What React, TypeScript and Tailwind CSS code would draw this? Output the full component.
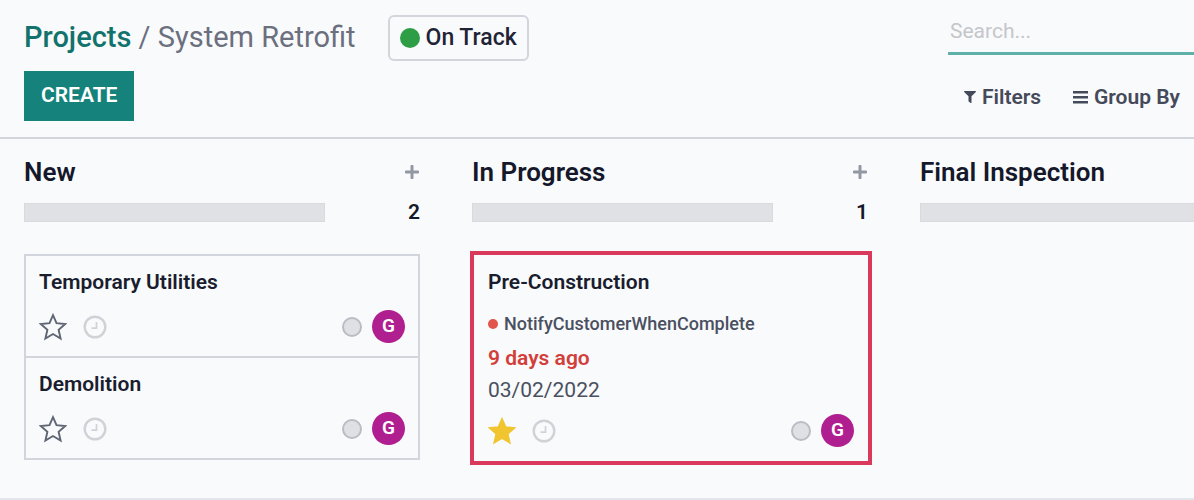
import { FaFilter, FaPlus } from "react-icons/fa";

interface Task {
  title: string;
  starred?: boolean;
  highlighted?: boolean;
  tag?: string;
  deadline?: string;
  date?: string;
}

interface Stage {
  name: string;
  tasks: Task[];
}

const stages: Stage[] = [
  {
    name: "New",
    tasks: [{ title: "Temporary Utilities" }, { title: "Demolition" }],
  },
  {
    name: "In Progress",
    tasks: [
      {
        title: "Pre-Construction",
        starred: true,
        highlighted: true,
        tag: "NotifyCustomerWhenComplete",
        deadline: "9 days ago",
        date: "03/02/2022",
      },
    ],
  },
  { name: "Final Inspection", tasks: [] },
];

function Star({ filled }: { filled?: boolean }) {
  return (
    <svg
      viewBox="0 0 28 28"
      className={filled ? "size-7 fill-[#f0c530] stroke-[#f0c530]" : "size-7 fill-none stroke-[#5f6673]"}
      strokeWidth="1.9"
    >
      <path d="M14 2.2l3.5 8 8.7.8-6.6 5.8 2 8.7L14 21l-7.6 4.5 2-8.7L1.8 11l8.7-.8z" />
    </svg>
  );
}

function Clock() {
  return (
    <svg viewBox="0 0 24 24" className="size-6" fill="none" stroke="#d0d2d7">
      <circle cx="12" cy="12" r="10.3" strokeWidth="2.4" />
      <path d="M13.5 7v6.2H8.5" strokeWidth="1.7" />
    </svg>
  );
}

function Bars() {
  return (
    <svg viewBox="0 0 15 14" className="h-3.5 w-[15px]" fill="#454a5a">
      <path d="M0 1h15v2.4H0zM0 6h15v2.4H0zM0 11h15v2.4H0z" />
    </svg>
  );
}

function TaskCard({ task }: { task: Task }) {
  return (
    <article
      className={
        task.highlighted
          ? "-mt-[3px] -mr-1 -ml-0.5 border-4 border-[#d93a5c] px-3.5 pt-[13px] pb-3.5"
          : "border-2 border-[#d3d5dc] px-[13px] pt-3 pb-[13px] not-first:border-t-0"
      }
    >
      <h3 className="text-[21px] leading-7 font-semibold text-[#1a1d2e]">{task.title}</h3>
      {task.tag && (
        <p className="mt-4 flex items-center gap-1.5 text-[18px] leading-6 font-medium text-[#4a5060]">
          <span className="size-2.5 rounded-full bg-[#e0554c]" />
          {task.tag}
        </p>
      )}
      {task.deadline && (
        <p className="mt-2 text-[21px] leading-7 font-semibold text-[#d23f3a]">{task.deadline}</p>
      )}
      {task.date && <p className="mt-1 text-[21px] leading-7 text-[#4a5060]">{task.date}</p>}
      <div className={task.date ? "mt-2.5 flex items-center" : "mt-3.5 flex items-center"}>
        <button aria-label="Priority" className="mr-4">
          <Star filled={task.starred} />
        </button>
        <button aria-label="Schedule activity">
          <Clock />
        </button>
        <button
          aria-label="Task state"
          className="mr-2.5 ml-auto size-5 rounded-full border-2 border-[#b9bdc3] bg-[#dfe0e4]"
        />
        <span className="flex size-[33px] items-center justify-center rounded-full bg-[#b01f8f] text-[19px] font-semibold text-white">
          G
        </span>
      </div>
    </article>
  );
}

function StageColumn({ stage }: { stage: Stage }) {
  return (
    <section className="w-[396px] shrink-0">
      <div className="flex items-center justify-between">
        <h2 className="text-[26px] leading-8 font-semibold text-[#15182a]">{stage.name}</h2>
        <button aria-label="Add task" className="text-[#9298a2]">
          <FaPlus className="size-4" />
        </button>
      </div>
      <div className="mt-2.5 flex h-7 items-center justify-between">
        <div className="h-[19px] w-[301px] border border-[#d8dade] bg-[#e0e1e5]" />
        <span className="text-[21px] leading-7 font-semibold text-[#15182a]">
          {stage.tasks.length || ""}
        </span>
      </div>
      <div className="mt-7">
        {stage.tasks.map((task) => (
          <TaskCard key={task.title} task={task} />
        ))}
      </div>
    </section>
  );
}

export default function App() {
  return (
    <div className="overflow-hidden border-b-2 border-[#e3e6ea] bg-[#f9fafc] font-[Roboto,sans-serif]">
      <header className="flex justify-between border-b-2 border-[#d3d5dc] pt-[15px] pb-4 pl-6">
        <div>
          <div className="flex items-center">
            <h1 className="pb-0.5 text-[29px] leading-10 text-[#6b6f7e]">
              <a href="#projects" className="font-medium text-[#12736c]">
                Projects
              </a>{" "}
              / System Retrofit
            </h1>
            <button className="ml-8 flex h-[46px] items-center gap-1.5 rounded-md border-2 border-[#d3d5dc] px-2.5 text-[23px] font-medium text-[#1f2336]">
              <span className="size-5 rounded-full bg-[#2e9e46]" />
              On Track
            </button>
          </div>
          <button className="mt-2.5 h-[50px] bg-[#15837c] px-[17px] text-[21px] font-semibold text-white">
            CREATE
          </button>
        </div>
        <div className="w-[246px]">
          <input
            type="search"
            aria-label="Search"
            placeholder="Search..."
            className="h-10 w-full border-b-3 border-[#5fb0a8] px-0.5 pb-1.5 text-[21px] outline-none placeholder:text-[#c4c6ca]"
          />
          <div className="mt-7 flex justify-between pr-3.5 pl-4 text-[21px] leading-7 font-semibold text-[#454a5a]">
            <button className="flex items-center gap-1.5">
              <FaFilter className="size-3" />
              Filters
            </button>
            <button className="flex items-center gap-1.5">
              <Bars />
              Group By
            </button>
          </div>
        </div>
      </header>
      <main className="flex gap-[52px] pt-[17px] pb-[33px] pl-6">
        {stages.map((stage) => (
          <StageColumn key={stage.name} stage={stage} />
        ))}
      </main>
    </div>
  );
}
